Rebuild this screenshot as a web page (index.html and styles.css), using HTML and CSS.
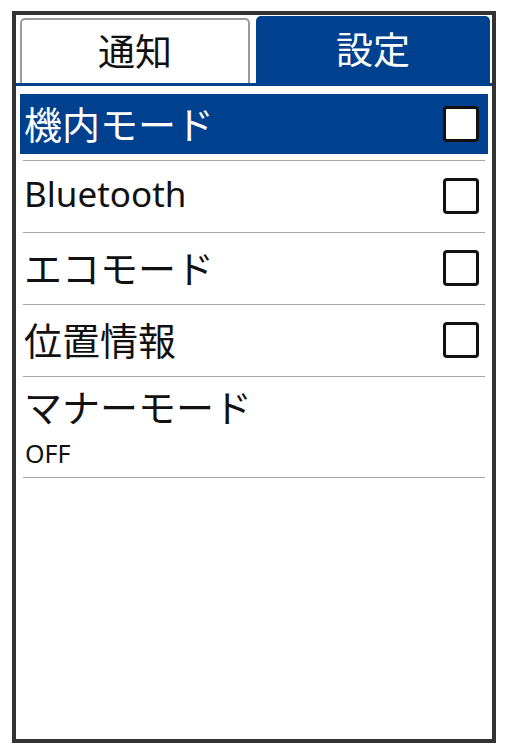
FILE: index.html
```html
<!DOCTYPE html>
<html lang="ja">
<head>
<meta charset="utf-8">
<title>設定</title>
<link rel="stylesheet" href="styles.css">
</head>
<body>
<div class="frame">
  <div class="tabs">
    <div class="tab">通知</div>
    <div class="tab tab-active">設定</div>
  </div>
  <div class="tab-line"></div>
  <ul class="list">
    <li class="row">
      <div class="row-body selected">
        <span class="label">機内モード</span>
        <span class="check"></span>
      </div>
      <div class="sep"></div>
    </li>
    <li class="row">
      <div class="row-body">
        <span class="label latin">Bluetooth</span>
        <span class="check"></span>
      </div>
      <div class="sep"></div>
    </li>
    <li class="row">
      <div class="row-body">
        <span class="label">エコモード</span>
        <span class="check"></span>
      </div>
      <div class="sep"></div>
    </li>
    <li class="row">
      <div class="row-body">
        <span class="label">位置情報</span>
        <span class="check"></span>
      </div>
      <div class="sep"></div>
    </li>
    <li class="row">
      <div class="row-body tall">
        <span class="label">マナーモード</span>
        <span class="sub">OFF</span>
      </div>
      <div class="sep"></div>
    </li>
  </ul>
</div>
</body>
</html>
```

FILE: styles.css
```css
html, body {
  margin: 0;
  padding: 0;
  background: #ffffff;
}

body {
  font-family: "Noto Sans", "Noto Sans CJK JP", sans-serif;
  color: #111111;
  padding: 11px 0 0 12px;
}

.frame {
  box-sizing: border-box;
  width: 484px;
  height: 732px;
  border: 4px solid #333333;
  background: #ffffff;
  display: flex;
  flex-direction: column;
}

.tabs {
  height: 68px;
  display: flex;
  align-items: flex-end;
  gap: 6px;
  padding: 0 2px 0 4px;
}

.tab {
  box-sizing: border-box;
  width: 230px;
  height: 65px;
  border: 2px solid #9a9a9a;
  border-bottom: none;
  border-radius: 5px 5px 0 0;
  display: flex;
  align-items: center;
  justify-content: center;
  font-family: "Noto Sans CJK JP", sans-serif;
  font-size: 37px;
  line-height: 1;
  color: #111111;
  padding-bottom: 3px;
}

.tab-active {
  width: 234px;
  height: 67px;
  border: none;
  background: #00418f;
  color: #ffffff;
  padding-bottom: 2px;
}

.tab-line {
  height: 3px;
  background: #00418f;
}

.list {
  list-style: none;
  margin: 0;
  padding: 3px 4px 0 4px;
}

.row {
  padding-top: 5px;
}

.row-body {
  height: 60px;
  display: flex;
  align-items: center;
  justify-content: space-between;
  padding: 0 9px 0 4px;
}

.selected {
  background: #00418f;
  color: #ffffff;
}

.label {
  font-family: "Noto Sans CJK JP", sans-serif;
  font-size: 38px;
  line-height: 46px;
  padding-bottom: 3px;
}

.latin {
  font-family: "Noto Sans", sans-serif;
  font-size: 35px;
  padding-bottom: 4px;
}

.check {
  box-sizing: border-box;
  width: 36px;
  height: 36px;
  border: 3px solid #111111;
  border-radius: 4px;
  background: #ffffff;
}

.tall {
  height: 89px;
  flex-direction: column;
  align-items: flex-start;
  justify-content: flex-start;
  padding-top: 1px;
  box-sizing: border-box;
}

.tall .label {
  padding-bottom: 0;
}

.sub {
  font-family: "Noto Sans", sans-serif;
  font-size: 25px;
  line-height: 30px;
  margin-top: 9px;
  padding-left: 1px;
}

.sep {
  height: 1px;
  margin: 6px 3px 0 3px;
  background: #a3a7aa;
}
```
